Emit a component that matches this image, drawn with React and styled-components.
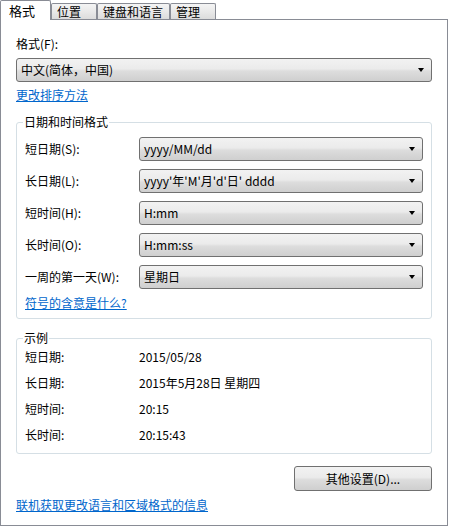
import React from 'react'
import styled, { createGlobalStyle } from 'styled-components'

const GlobalStyle = createGlobalStyle`
  body {
    margin: 0;
    background: #fff;
    font-family: "Noto Sans CJK SC", "Noto Sans", sans-serif;
    font-size: 12px;
    line-height: 16px;
    color: #000;
  }
`

const Dialog = styled.div`
  width: 448px;
`

const TabBar = styled.div`
  position: relative;
  z-index: 1;
  display: flex;
  align-items: flex-start;
  height: 20px;
`

const Tab = styled.div`
  box-sizing: border-box;
  width: ${({ $width }) => $width}px;
  height: ${({ $active }) => ($active ? 20 : 16)}px;
  margin-top: ${({ $active }) => ($active ? 0 : 3)}px;
  padding-left: ${({ $active }) => ($active ? 8 : 5)}px;
  border: 1px solid #898c95;
  border-bottom: none;
  border-radius: 2px 2px 0 0;
  background: ${({ $active }) =>
    $active ? '#fff' : 'linear-gradient(#f4f4f4 0%, #e9e9e9 50%, #dcdcdc 100%)'};
  display: flex;
  align-items: center;
  white-space: nowrap;
  font-size: ${({ $active }) => ($active ? 13 : 12)}px;
`

const Panel = styled.div`
  margin-top: -1px;
  border: 1px solid #898c95;
  background: #fff;
  padding: 16px 15px 12px 15px;
  display: flex;
  flex-direction: column;
`

const Label = styled.div`
  height: 16px;
`

const Select = styled.div`
  box-sizing: border-box;
  height: 24px;
  margin-top: ${({ $mt }) => $mt || 0}px;
  border: 1px solid #707070;
  border-radius: 3px;
  background: linear-gradient(#f2f2f2 0%, #ebebeb 45%, #dddddd 55%, #cfcfcf 100%);
  display: flex;
  align-items: center;
  justify-content: space-between;
  padding: 0 7px 0 4px;
`

const Arrow = styled.span`
  width: 0;
  height: 0;
  border-left: 3.5px solid transparent;
  border-right: 3.5px solid transparent;
  border-top: 4px solid #000;
`

const Link = styled.a`
  display: block;
  color: #0066cc;
  text-decoration: underline;
  margin-top: ${({ $mt }) => $mt || 0}px;
  height: 16px;
  align-self: flex-start;
`

const Group = styled.fieldset`
  margin: ${({ $mt }) => $mt || 0}px 0 0 0;
  border: 1px solid #d5dfe5;
  border-radius: 3px;
  padding: ${({ $pt }) => $pt}px 8px ${({ $pb }) => $pb}px 8px;
  min-width: 0;
`

const Legend = styled.legend`
  padding: 0 1px;
  margin-left: -2px;
  line-height: 16px;
  color: #000;
`

const FormGrid = styled.div`
  display: grid;
  grid-template-columns: 114px 1fr;
  row-gap: ${({ $gap }) => $gap}px;
  align-items: center;
`

const Footer = styled.div`
  display: flex;
  justify-content: flex-end;
  margin-top: 12px;
`

const Button = styled.button`
  box-sizing: border-box;
  width: 138px;
  height: 25px;
  border: 1px solid #707070;
  border-radius: 3px;
  background: linear-gradient(#f2f2f2 0%, #ebebeb 45%, #dddddd 55%, #cfcfcf 100%);
  font: inherit;
  color: #000;
  padding: 0;
`

const formats = [
  ['短日期(S):', 'yyyy/MM/dd'],
  ['长日期(L):', "yyyy'年'M'月'd'日' dddd"],
  ['短时间(H):', 'H:mm'],
  ['长时间(O):', 'H:mm:ss'],
  ['一周的第一天(W):', '星期日'],
]

const samples = [
  ['短日期:', '2015/05/28'],
  ['长日期:', '2015年5月28日 星期四'],
  ['短时间:', '20:15'],
  ['长时间:', '20:15:43'],
]

const tabs = [
  { label: '格式', width: 51, active: true },
  { label: '位置', width: 46 },
  { label: '键盘和语言', width: 73 },
  { label: '管理', width: 46 },
]

export default function App() {
  return (
    <Dialog>
      <GlobalStyle />
      <TabBar>
        {tabs.map(t => (
          <Tab key={t.label} $width={t.width} $active={t.active}>{t.label}</Tab>
        ))}
      </TabBar>
      <Panel>
        <Label>格式(F):</Label>
        <Select $mt={6}>
          <span>中文(简体，中国)</span>
          <Arrow />
        </Select>
        <Link $mt={5}>更改排序方法</Link>

        <Group $mt={11} $pt={7} $pb={7}>
          <Legend>日期和时间格式</Legend>
          <FormGrid $gap={8}>
            {formats.map(([k, v]) => (
              <React.Fragment key={k}>
                <Label>{k}</Label>
                <Select>
                  <span>{v}</span>
                  <Arrow />
                </Select>
              </React.Fragment>
            ))}
          </FormGrid>
          <Link $mt={6}>符号的含意是什么?</Link>
        </Group>

        <Group $mt={11} $pt={3} $pb={10}>
          <Legend>示例</Legend>
          <FormGrid $gap={10}>
            {samples.map(([k, v]) => (
              <React.Fragment key={k}>
                <Label>{k}</Label>
                <Label>{v}</Label>
              </React.Fragment>
            ))}
          </FormGrid>
        </Group>

        <Footer>
          <Button>其他设置(D)...</Button>
        </Footer>
        <Link $mt={6}>联机获取更改语言和区域格式的信息</Link>
      </Panel>
    </Dialog>
  )
}
